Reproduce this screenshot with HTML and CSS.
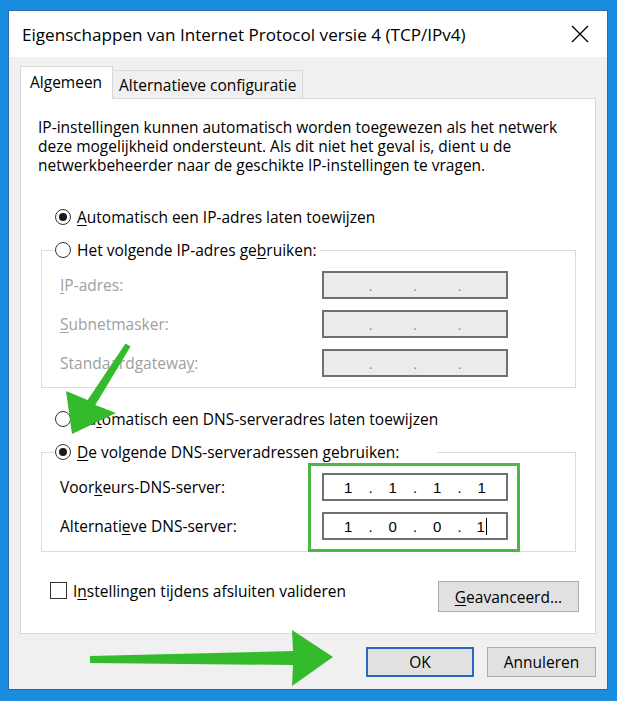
FILE: index.html
```html
<!DOCTYPE html>
<html lang="nl">
<head>
    <meta charset="UTF-8">
    <title>Eigenschappen van Internet Protocol versie 4 (TCP/IPv4)</title>
    <link rel="stylesheet" href="styles.css">
</head>
<body>
    <div class="window">
        <div class="titlebar">
            <span class="title">Eigenschappen van Internet Protocol versie 4 (TCP/IPv4)</span>
            <svg class="close" width="18" height="18" viewBox="0 0 18 18">
                <path d="M1 1L17 17M17 1L1 17" stroke="#000" stroke-width="1.3" fill="none"/>
            </svg>
        </div>
        <div class="dialog">
            <div class="tabs">
                <div class="tab active">Algemeen</div>
                <div class="tab">Alternatieve configuratie</div>
            </div>
            <div class="panel">
                <p class="intro">IP-instellingen kunnen automatisch worden toegewezen als het netwerk<br>deze mogelijkheid ondersteunt. Als dit niet het geval is, dient u de<br>netwerkbeheerder naar de geschikte IP-instellingen te vragen.</p>

                <div class="option first">
                    <span class="radio checked"></span>
                    <span><u>A</u>utomatisch een IP-adres laten toewijzen</span>
                </div>
                <fieldset class="group">
                    <legend class="legend-ip">
                        <div class="option">
                            <span class="radio"></span>
                            <span>Het volgende IP-adres ge<u>b</u>ruiken:</span>
                        </div>
                    </legend>
                    <div class="fields disabled">
                        <label><u>I</u>P-adres:</label>
                        <div class="ipbox">
                            <span class="octet"></span><span class="dot">.</span><span class="octet"></span><span class="dot">.</span><span class="octet"></span><span class="dot">.</span><span class="octet"></span>
                        </div>
                        <label><u>S</u>ubnetmasker:</label>
                        <div class="ipbox">
                            <span class="octet"></span><span class="dot">.</span><span class="octet"></span><span class="dot">.</span><span class="octet"></span><span class="dot">.</span><span class="octet"></span>
                        </div>
                        <label>Standaardgatewa<u>y</u>:</label>
                        <div class="ipbox">
                            <span class="octet"></span><span class="dot">.</span><span class="octet"></span><span class="dot">.</span><span class="octet"></span><span class="dot">.</span><span class="octet"></span>
                        </div>
                    </div>
                </fieldset>

                <div class="option dns-auto">
                    <span class="radio"></span>
                    <span>Au<u>t</u>omatisch een DNS-serveradres laten toewijzen</span>
                </div>
                <fieldset class="group">
                    <legend class="legend-dns">
                        <div class="option">
                            <span class="radio checked"></span>
                            <span><u>D</u>e volgende DNS-serveradressen gebruiken:</span>
                        </div>
                    </legend>
                    <div class="fields">
                        <label>Voor<u>k</u>eurs-DNS-server:</label>
                        <div class="ipbox">
                            <span class="octet">1</span><span class="dot">.</span><span class="octet">1</span><span class="dot">.</span><span class="octet">1</span><span class="dot">.</span><span class="octet">1</span>
                        </div>
                        <label>Alternati<u>e</u>ve DNS-server:</label>
                        <div class="ipbox">
                            <span class="octet">1</span><span class="dot">.</span><span class="octet">0</span><span class="dot">.</span><span class="octet">0</span><span class="dot">.</span><span class="octet"><span class="caret">1</span></span>
                        </div>
                    </div>
                </fieldset>

                <div class="panel-footer">
                    <div class="check">
                        <span class="checkbox"></span>
                        <span>I<u>n</u>stellingen tijdens afsluiten valideren</span>
                    </div>
                    <button class="button advanced"><u>G</u>eavanceerd...</button>
                </div>
            </div>
            <div class="actions">
                <button class="button default">OK</button>
                <button class="button">Annuleren</button>
            </div>
        </div>
    </div>

    <!-- groene markeringen over de schermafbeelding -->
    <svg class="marks" width="617" height="701" viewBox="0 0 617 701">
        <rect x="309.5" y="464.5" width="209" height="86" fill="none" stroke="#4bb846" stroke-width="3"/>
        <polygon points="125.5,343.4 87.7,400 66,391 72,434 116,413 95.3,405 130.5,346.6" fill="#34bb2c"/>
        <polygon points="90,656 293,651 292,630 333,657 292,686 293,665 90,663" fill="#34bb2c"/>
    </svg>
</body>
</html>
```

FILE: styles.css
```css
* {
    box-sizing: border-box;
}

body {
    margin: 0;
    height: 701px;
    overflow: hidden;
    position: relative;
    background-color: #1b8de0;
    font-family: "Open Sans", "Noto Sans", sans-serif;
    font-size: 15.5px;
    color: #000;
}

.window {
    width: 600px;
    height: 680px;
    margin: 10px 0 0 8px;
    border: 1px solid #2b6aaf;
    background-color: #f0f0f0;
    display: flex;
    flex-direction: column;
}

.titlebar {
    height: 46px;
    background-color: #fff;
    display: flex;
    align-items: center;
    padding-left: 13px;
}

.title {
    flex: 1;
    font-size: 17.1px;
}

.close {
    margin-right: 18px;
}

.dialog {
    padding: 9px 11px 0 11px;
}

.tabs {
    height: 32px;
    display: flex;
    align-items: flex-end;
}

.tab {
    height: 28px;
    width: 191px;
    border: 1px solid #d9d9d9;
    border-bottom: none;
    margin-left: -1px;
    padding-left: 6px;
    display: flex;
    align-items: center;
    background-color: #f0f0f0;
}

.tab.active {
    position: relative;
    z-index: 1;
    height: 33px;
    width: 93px;
    margin-left: 0;
    margin-bottom: -1px;
    padding-left: 9px;
    padding-bottom: 3px;
    background-color: #fff;
}

.panel {
    background-color: #fff;
    border: 1px solid #d9d9d9;
    padding: 19px 0 21px 17px;
}

.intro {
    margin: 0;
    line-height: 19px;
}

.option {
    display: flex;
    align-items: center;
    gap: 6px;
    height: 20px;
}

.option.first {
    margin: 32px 0 0 17px;
}

.option.dns-auto {
    margin: 21px 0 0 17px;
}

.radio {
    width: 16px;
    height: 16px;
    border: 1px solid #333;
    border-radius: 50%;
    display: flex;
    align-items: center;
    justify-content: center;
    flex-shrink: 0;
}

.radio.checked::after {
    content: "";
    width: 8px;
    height: 8px;
    border-radius: 50%;
    background-color: #1a1a1a;
}

u {
    text-decoration-thickness: 1px;
    text-underline-offset: 2px;
}

.group {
    width: 535px;
    margin: 13px 0 0 3px;
    padding: 0 0 10px 0;
    border: 1px solid #dcdcdc;
}

.group legend {
    margin-left: 12px;
    padding: 0 4px 0 1px;
}

.group .legend-dns {
    padding-right: 38px;
}

.fields {
    display: grid;
    grid-template-columns: 262px 186px;
    row-gap: 11px;
    align-items: center;
    margin: 11px 0 0 18px;
}

.fields.disabled label {
    color: #a0a0a0;
}

.ipbox {
    height: 28px;
    border: 2px solid #707070;
    background-color: #fff;
    display: flex;
    align-items: center;
    justify-content: center;
    font-family: "Liberation Sans", sans-serif;
    font-size: 15px;
}

.fields.disabled .ipbox {
    background-color: #ececec;
    color: #8a8a8a;
}

.octet {
    width: 34px;
    text-align: center;
}

.dot {
    width: 10.5px;
    text-align: center;
}

.caret {
    border-right: 1px solid #000;
    padding-right: 1px;
}

.group:last-of-type {
    padding-bottom: 11px;
}

.panel-footer {
    display: flex;
    justify-content: space-between;
    align-items: flex-start;
    margin-top: 29px;
    padding-right: 16px;
}

.check {
    display: flex;
    align-items: center;
    gap: 6px;
    height: 19px;
    margin-left: 12px;
}

.checkbox {
    width: 17px;
    height: 17px;
    border: 1px solid #333;
    background-color: #fff;
}

.button {
    height: 30px;
    border: 1px solid #adadad;
    background-color: #e1e1e1;
    font-family: inherit;
    font-size: 15.5px;
    color: #000;
    padding: 0;
}

.button.advanced {
    width: 141px;
    height: 31px;
}

.actions {
    display: flex;
    justify-content: flex-end;
    gap: 13px;
    margin-top: 13px;
}

.actions .button {
    width: 109px;
}

.actions .button.default {
    width: 108px;
    border: 2px solid #2b68bd;
}

.marks {
    position: absolute;
    top: 0;
    left: 0;
    pointer-events: none;
}
```
